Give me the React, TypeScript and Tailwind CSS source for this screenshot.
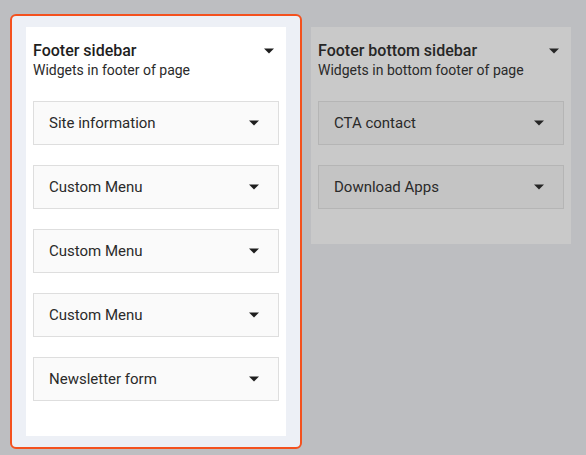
import React from "react";

const Caret = () => (
  <svg width="10" height="6" viewBox="0 0 10 6" className="shrink-0">
    <path d="M0 0.5 H10 L5 5.5 Z" fill="currentColor" />
  </svg>
);

type Props = {
  title: string;
  subtitle: string;
  items: string[];
  dim?: boolean;
};

const Panel = ({ title, subtitle, items, dim }: Props) => (
  <div
    className={
      "w-[260px] px-[7px] pt-[14px] pb-[35px] " +
      (dim ? "bg-[#c9c9c9] text-[#262626]" : "bg-white text-[#1e1e1e]")
    }
  >
    <div className="flex items-center justify-between pr-[5px] h-[20px]">
      <span className="text-[16px] leading-[20px] font-medium">{title}</span>
      <Caret />
    </div>
    <div className="text-[14px] leading-[18px] text-[#2a2a2a]">{subtitle}</div>
    <div className="mt-[22px] flex flex-col gap-[20px]">
      {items.map((it, i) => (
        <div
          key={i}
          className={
            "h-[44px] flex items-center justify-between pl-[15px] pr-[19px] border " +
            (dim ? "bg-[#c4c4c4] border-[#b5b5b5]" : "bg-[#fafafa] border-[#dedede]")
          }
        >
          <span className="text-[15px] leading-[20px] text-[#2a2a2a]">{it}</span>
          <Caret />
        </div>
      ))}
    </div>
  </div>
);

export default function App() {
  return (
    <div
      className="w-[586px] h-[455px] bg-[#bdbec1] flex items-start pl-[10px] pt-[14px] gap-[9px] overflow-hidden"
      style={{ fontFamily: "Roboto, 'Noto Sans', sans-serif" }}
    >
      <div className="border-2 border-[#f4511e] rounded-[6px] bg-[#edf0f6] pl-[14px] pr-[13px] pt-[11px] pb-[11px]">
        <div className="w-[261px]">
          <Panel
            title="Footer sidebar"
            subtitle="Widgets in footer of page"
            items={[
              "Site information",
              "Custom Menu",
              "Custom Menu",
              "Custom Menu",
              "Newsletter form",
            ]}
          />
        </div>
      </div>
      <div className="mt-[13px]">
        <Panel
          dim
          title="Footer bottom sidebar"
          subtitle="Widgets in bottom footer of page"
          items={["CTA contact", "Download Apps"]}
        />
      </div>
    </div>
  );
}
